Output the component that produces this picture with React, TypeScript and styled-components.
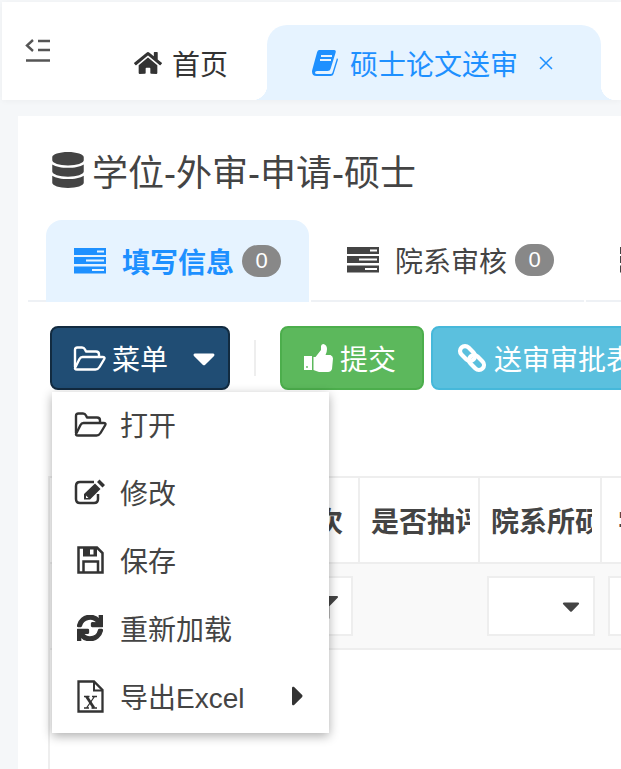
import styled, { createGlobalStyle } from "styled-components";
import { FaCaretDown, FaCaretRight, FaDatabase, FaFilter, FaHome, FaSync } from "react-icons/fa";

const GlobalStyle = createGlobalStyle`
  html, body {
    margin: 0;
    padding: 0;
    background: #f5f7f9;
    overflow: hidden;
  }
  body {
    font-family: "Liberation Sans", "Noto Sans CJK SC", sans-serif;
    color: #444;
  }
`;

const Page = styled.div`
  width: 621px;
  height: 769px;
  overflow: hidden;
  padding: 2px 0 0 2px;
  box-sizing: border-box;
`;

const TopBar = styled.header`
  height: 98px;
  background: #fff;
  display: flex;
  align-items: flex-end;
  box-shadow: 0 1px 6px rgba(0, 0, 0, 0.04);
`;

const Toggle = styled.button`
  width: 72px;
  height: 98px;
  border: 0;
  padding: 37px 0 0 23px;
  background: none;
  display: flex;
  align-items: flex-start;
  box-sizing: border-box;
`;

const PageTabs = styled.nav`
  display: flex;
  align-items: flex-end;
  height: 75px;
`;

const HomeTab = styled.div`
  width: 193px;
  height: 75px;
  display: flex;
  align-items: center;
  gap: 10px;
  padding: 0 0 0 60px;
  box-sizing: border-box;
  font-size: 28px;
  color: #333;
`;

const ActiveTab = styled.div`
  position: relative;
  width: 334px;
  height: 75px;
  flex: none;
  background: #e6f3ff;
  border-radius: 20px 20px 0 0;
  display: flex;
  align-items: center;
  padding-left: 45px;
  box-sizing: border-box;
  font-size: 28px;
  color: #1e90ff;
  &::before,
  &::after {
    content: "";
    position: absolute;
    bottom: 0;
    width: 15px;
    height: 15px;
  }
  &::before {
    left: -15px;
    background: radial-gradient(circle at 0 0, transparent 15px, #e6f3ff 15.5px);
  }
  &::after {
    right: -15px;
    background: radial-gradient(circle at 100% 0, transparent 15px, #e6f3ff 15.5px);
  }
`;

const TabLabel = styled.span`
  margin-left: 12px;
`;

const CloseIcon = styled.svg`
  margin-left: 21px;
`;

const Card = styled.main`
  position: relative;
  margin: 16px 0 0 16px;
  height: 660px;
  background: #fff;
  padding: 30px 0 0 10px;
  overflow: hidden;
`;

const Title = styled.h1`
  margin: 0 0 0 24px;
  height: 48px;
  display: flex;
  align-items: center;
  gap: 6px;
  font-size: 36px;
  font-weight: 400;
  color: #444;
  white-space: nowrap;
  svg {
    margin-left: -2px;
  }
`;

const SubTabs = styled.div`
  display: flex;
  margin-top: 26px;
  height: 82px;
  white-space: nowrap;
`;

const TabLead = styled.div`
  width: 18px;
  flex: none;
  border-bottom: 2px solid #eef1f5;
`;

const SubTab = styled.div<{ $active?: boolean; $pad: number }>`
  width: ${({ $active }) => ($active ? "263px" : "273px")};
  flex: none;
  margin-left: ${({ $active }) => ($active ? "0" : "2px")};
  display: flex;
  align-items: center;
  padding-left: ${({ $pad }) => $pad}px;
  box-sizing: border-box;
  border-radius: 16px 16px 0 0;
  border-bottom: ${({ $active }) => ($active ? "0" : "2px solid #eef1f5")};
  background: ${({ $active }) => ($active ? "#e6f3ff" : "transparent")};
  color: ${({ $active }) => ($active ? "#1e90ff" : "#444")};
  font-size: 28px;
  font-weight: ${({ $active }) => ($active ? 700 : 400)};
`;

const Lines = styled.svg`
  margin-right: 16px;
  flex: none;
`;

const Badge = styled.span`
  width: 39px;
  height: 32px;
  margin-left: 8px;
  border-radius: 16px;
  background: #888;
  color: #fff;
  font-size: 22px;
  font-weight: 400;
  display: flex;
  align-items: center;
  justify-content: center;
`;

const Toolbar = styled.div`
  display: flex;
  align-items: center;
  margin: 24px 0 0 22px;
  height: 64px;
  white-space: nowrap;
`;

const Button = styled.button<{ $bg: string; $border: string }>`
  height: 64px;
  flex: none;
  display: flex;
  align-items: center;
  box-sizing: border-box;
  padding: 0 26px 0 22px;
  border: 2px solid ${({ $border }) => $border};
  border-radius: 8px;
  background: ${({ $bg }) => $bg};
  color: #fff;
  font: inherit;
  font-size: 28px;
  margin-right: 7px;
`;

const ButtonIcon = styled.svg`
  margin-right: 7px;
  flex: none;
`;

const MenuButton = styled(Button)`
  width: 180px;
  padding: 0 0 0 21px;
  margin-right: 0;
  svg:first-child {
    margin-right: 6px;
  }
  svg:last-child {
    font-size: 36px;
    margin-left: 18px;
  }
`;

const Divider = styled.span`
  width: 2px;
  height: 36px;
  flex: none;
  margin: 0 24px;
  background: #eee;
`;

const Table = styled.div`
  margin: 86px 0 0 20px;
  height: 400px;
  display: grid;
  grid-template-columns: 310px 120px 122px 200px;
  align-content: start;
  border-left: 2px solid #eee;
  border-top: 2px solid #eee;
`;

const HeadCell = styled.div<{ $end?: boolean; $left?: number }>`
  height: 86px;
  box-sizing: border-box;
  border-right: 2px solid #eee;
  border-bottom: 2px solid #eee;
  display: flex;
  align-items: center;
  justify-content: ${({ $end }) => ($end ? "flex-end" : "flex-start")};
  padding: ${({ $end, $left }) => ($end ? "0 15px 0 0" : `0 0 0 ${$left ?? 11}px`)};
  overflow: hidden;
  font-size: 28px;
  font-weight: 700;
  white-space: nowrap;
`;

const HeadText = styled.span<{ $width?: number }>`
  display: block;
  flex: none;
  width: ${({ $width }) => ($width ? `${$width}px` : "auto")};
  overflow: hidden;
`;

const FilterCell = styled.div<{ $left?: number }>`
  height: 86px;
  box-sizing: border-box;
  background: #f9f9f9;
  border-bottom: 2px solid #eee;
  padding: 12px 7px 0 ${({ $left }) => $left ?? 7}px;
`;

const SelectBox = styled.div`
  height: 60px;
  box-sizing: border-box;
  background: #fff;
  border: 2px solid #eee;
  display: flex;
  align-items: center;
  justify-content: flex-end;
  padding-right: 8px;
  color: #444;
  font-size: 28px;
`;

const FilterIcon = styled(FaFilter)`
  font-size: 23px;
  margin: 3px 5px 0 0;
`;

const Dropdown = styled.ul`
  position: absolute;
  left: 34px;
  top: 276px;
  width: 277px;
  height: 341px;
  margin: 0;
  padding: 0;
  list-style: none;
  background: #fff;
  box-shadow: 0 3px 10px rgba(0, 0, 0, 0.32);
`;

const MenuItem = styled.li`
  height: 68px;
  box-sizing: border-box;
  padding: 0 0 4px 20px;
  display: flex;
  align-items: center;
  font-size: 28px;
  color: #444;
  position: relative;
`;

const MenuIcon = styled.span`
  width: 36px;
  height: 36px;
  margin-right: 12px;
  flex: none;
  display: flex;
  align-items: center;
  justify-content: center;
  font-size: 26px;
  color: #333;
`;

const Arrow = styled(FaCaretRight)`
  position: absolute;
  right: 15px;
  font-size: 32px;
  color: #333;
`;

function FolderOpen({ stroke }: { stroke: string }) {
  return (
    <svg width="33" height="25" viewBox="0 0 33 25" fill="none" stroke={stroke} strokeWidth="2.4" strokeLinejoin="round">
      <path d="M2 21V4Q2 1.5 4.5 1.500H9Q11 1.500 12 3.500L13 5.500H23Q26 5.500 26 8.500V11" />
      <path d="M9.500 11H29.500Q32.500 11 31 13.500L26.500 21Q25 23.500 22.500 23.500H4Q1 23.500 2.500 21L6.500 13Q7.500 11 9.500 11Z" />
    </svg>
  );
}

function BookIcon() {
  return (
    <svg width="26" height="26" viewBox="0 0 26 26">
      <path
        fill="#1e90ff"
        d="M7 0H22Q24.500 0 23.500 3L18.500 19Q18 21 15.500 21H5Q3 21 3 22.500 3 24 5 24H18.500Q20 24 20.500 22.500L25 8 26 9.500 21.500 24Q21 26 18.500 26H4.500Q0 26 0 21.500 0 20.500 .5 19L5 2.500Q5.500 0 7 0Z"
      />
      <path stroke="#e6f3ff" strokeWidth="1.800" d="M9 6H20M8 10H19" />
    </svg>
  );
}

function ServerLines({ color, back }: { color: string; back: string }) {
  return (
    <Lines width="32" height="26" viewBox="0 0 32 26">
      <path fill={color} d="M0 0H32V7H0ZM0 9H32V16H0ZM0 18.500H32V25.500H0Z" />
      <path fill={back} d="M23 2.500H30V4.500H23ZM12 11.500H30V13.500H12ZM18 21H30V23H18Z" />
    </Lines>
  );
}

function ThumbIcon() {
  return (
    <ButtonIcon width="29" height="28" viewBox="0 0 29 28" fill="#fff">
      <path d="M0 12H8V26H0Z" />
      <path d="M9.500 13H11.500L17 6V2Q17.500 0 19.500 0 23 1 23 5 23 8 21.500 11H26.500Q29 12 29 14.500L28 25Q27 28 24 28H15Q12 27 9.500 26Z" />
      <circle cx="3" cy="23" r="0.900" fill="#5cb85c" />
    </ButtonIcon>
  );
}

function LinkIcon() {
  return (
    <ButtonIcon width="32" height="30" viewBox="-2 0 32 30" fill="none" stroke="#fff" strokeWidth="4.200">
      <rect x="2" y="5.500" width="17" height="10" rx="5" transform="rotate(45 10.500 10.500)" />
      <rect x="11" y="14.500" width="17" height="10" rx="5" transform="rotate(45 19.500 19.500)" />
    </ButtonIcon>
  );
}

function EditIcon() {
  return (
    <svg width="32" height="26" viewBox="0 0 32 26" fill="none">
      <path stroke="#333" strokeWidth="2.500" d="M20 3H6Q2 3 2 7V20Q2 24 6 24H20Q24 24 24 20V15" />
      <path fill="#333" d="M10 15 21 4.500 26.500 10 16 20.500H10ZM23 3 25.500.5 31 6 28.500 8.500Z" />
      <path fill="#fff" d="M12 16.500 14.500 19H12Z" />
    </svg>
  );
}

function SaveIcon() {
  return (
    <svg width="27" height="28" viewBox="0 0 27 28" fill="none">
      <path stroke="#333" strokeWidth="2.500" d="M1.500 1.500H20L25.500 7V26.500H1.500Z" />
      <path fill="#333" d="M6 1.500H20V10.500H6Z" />
      <path fill="#fff" d="M13 3.500H16.500V8.500H13Z" />
      <path stroke="#333" strokeWidth="2.500" d="M6.500 26V15.500H21V26" />
    </svg>
  );
}

function ExcelIcon() {
  return (
    <svg width="27" height="33" viewBox="0 0 27 33" fill="none" stroke="#333">
      <path strokeWidth="2.300" d="M1.500 1.500H17L25.500 10V31.500H1.500Z" />
      <path strokeWidth="2" d="M17 2V10.500H25" />
      <path strokeWidth="2.800" d="M9.500 16.500 17 28" />
      <path strokeWidth="1.300" d="M17.500 16.500 9.500 28M7 16.500H12.500M15 16.500H20M7 28H12M14.500 28H20" />
    </svg>
  );
}

export default function App() {
  return (
    <Page>
      <GlobalStyle />
      <TopBar>
        <Toggle>
          <svg width="25" height="24" viewBox="0 0 25 24" fill="none" stroke="#555" strokeWidth="2.400">
            <path d="M8 1 2 6.500 8 12" />
            <path d="M13 2H25M13 11H25M1 21.500H25" />
          </svg>
        </Toggle>
        <PageTabs>
          <HomeTab>
            <FaHome />
            首页
          </HomeTab>
          <ActiveTab>
            <BookIcon />
            <TabLabel>硕士论文送审</TabLabel>
            <CloseIcon width="14" height="14" viewBox="0 0 14 14" stroke="#1e90ff" strokeWidth="1.500">
              <path d="M1 1 13 13M13 1 1 13" />
            </CloseIcon>
          </ActiveTab>
        </PageTabs>
      </TopBar>
      <Card>
        <Title>
          <FaDatabase />
          学位-外审-申请-硕士
        </Title>
        <SubTabs>
          <TabLead />
          <SubTab $active $pad={28}>
            <ServerLines color="#1e90ff" back="#e6f3ff" />
            填写信息
            <Badge>0</Badge>
          </SubTab>
          <SubTab $pad={36}>
            <ServerLines color="#444" back="#fff" />
            院系审核
            <Badge>0</Badge>
          </SubTab>
          <SubTab $pad={34}>
            <ServerLines color="#444" back="#fff" />
          </SubTab>
        </SubTabs>
        <Toolbar>
          <MenuButton $bg="#204d74" $border="#122b40">
            <FolderOpen stroke="#fff" />
            菜单
            <FaCaretDown />
          </MenuButton>
          <Divider />
          <Button $bg="#5cb85c" $border="#4cae4c">
            <ThumbIcon />
            提交
          </Button>
          <Button $bg="#5bc0de" $border="#46b8da">
            <LinkIcon />
            送审审批表
          </Button>
        </Toolbar>
        <Table>
          <HeadCell $end>
            <HeadText>学年批次</HeadText>
          </HeadCell>
          <HeadCell>
            <HeadText $width={99}>是否抽评</HeadText>
          </HeadCell>
          <HeadCell>
            <HeadText $width={101}>院系所硕士</HeadText>
          </HeadCell>
          <HeadCell $left={16}>
            <HeadText>学位类别</HeadText>
          </HeadCell>
          <FilterCell>
            <SelectBox>
              <FilterIcon />
            </SelectBox>
          </FilterCell>
          <FilterCell />
          <FilterCell>
            <SelectBox>
              <FaCaretDown />
            </SelectBox>
          </FilterCell>
          <FilterCell $left={6}>
            <SelectBox />
          </FilterCell>
        </Table>
        <Dropdown>
          <MenuItem>
            <MenuIcon>
              <FolderOpen stroke="#333" />
            </MenuIcon>
            打开
          </MenuItem>
          <MenuItem>
            <MenuIcon>
              <EditIcon />
            </MenuIcon>
            修改
          </MenuItem>
          <MenuItem>
            <MenuIcon>
              <SaveIcon />
            </MenuIcon>
            保存
          </MenuItem>
          <MenuItem>
            <MenuIcon>
              <FaSync stroke="currentColor" strokeWidth="30" />
            </MenuIcon>
            重新加载
          </MenuItem>
          <MenuItem>
            <MenuIcon>
              <ExcelIcon />
            </MenuIcon>
            导出Excel
            <Arrow />
          </MenuItem>
        </Dropdown>
      </Card>
    </Page>
  );
}
